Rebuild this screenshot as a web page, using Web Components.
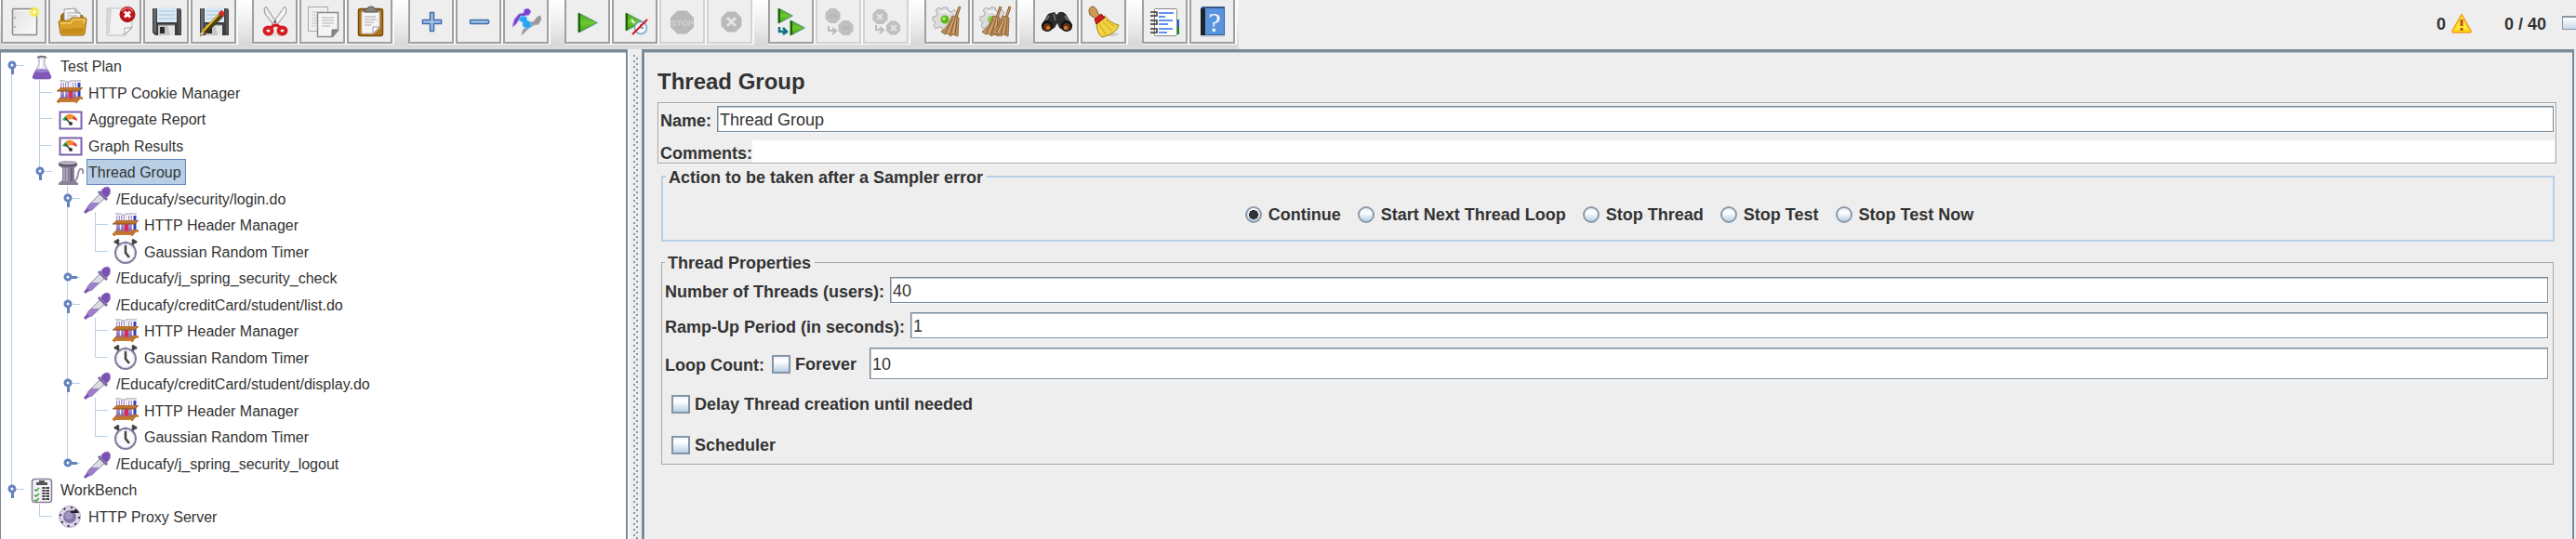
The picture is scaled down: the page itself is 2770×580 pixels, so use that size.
<!DOCTYPE html>
<html lang="en">
<head>
<meta charset="utf-8">
<title>Thread Group</title>
<style>
  html, body { margin: 0; height: 100%; }
  body { background: #eee; color: #333; font-family: "Liberation Sans", Arial, sans-serif; font-size: 18px; overflow: hidden; }
</style>
</head>
<body>
<jm-app>
  <jm-toolbar slot="toolbar">
    <jm-tool-group>
      <jm-tool icon="new" label="New"></jm-tool><jm-tool icon="open" label="Open"></jm-tool><jm-tool icon="close" label="Close"></jm-tool><jm-tool icon="save" label="Save"></jm-tool><jm-tool icon="saveas" label="Save as"></jm-tool>
    </jm-tool-group>
    <jm-tool-group>
      <jm-tool icon="cut" label="Cut"></jm-tool><jm-tool icon="copy" label="Copy"></jm-tool><jm-tool icon="paste" label="Paste"></jm-tool>
    </jm-tool-group>
    <jm-tool-group>
      <jm-tool icon="plus" label="Expand all"></jm-tool><jm-tool icon="minus" label="Collapse all"></jm-tool><jm-tool icon="toggle" label="Toggle"></jm-tool>
    </jm-tool-group>
    <jm-tool-group>
      <jm-tool icon="play" label="Start"></jm-tool><jm-tool icon="playnow" label="Start no pauses"></jm-tool><jm-tool icon="stop" label="Stop" disabled></jm-tool><jm-tool icon="shutdown" label="Shutdown" disabled></jm-tool>
    </jm-tool-group>
    <jm-tool-group>
      <jm-tool icon="rstart" label="Remote start all"></jm-tool><jm-tool icon="rstop" label="Remote stop all" disabled></jm-tool><jm-tool icon="rshut" label="Remote shutdown all" disabled></jm-tool>
    </jm-tool-group>
    <jm-tool-group>
      <jm-tool icon="clear" label="Clear"></jm-tool><jm-tool icon="clearall" label="Clear all"></jm-tool>
    </jm-tool-group>
    <jm-tool-group>
      <jm-tool icon="find" label="Search"></jm-tool><jm-tool icon="reset" label="Reset search"></jm-tool>
    </jm-tool-group>
    <jm-tool-group>
      <jm-tool icon="func" label="Function helper"></jm-tool><jm-tool icon="help" label="Help"></jm-tool>
    </jm-tool-group>
  </jm-toolbar>
  <jm-status slot="status" errors="0" threads="0 / 40"></jm-status>

  <jm-tree slot="tree">
    <jm-row guides="O" icon="flask">Test Plan</jm-row>
    <jm-row guides="|+" icon="tubes">HTTP Cookie Manager</jm-row>
    <jm-row guides="|+" icon="gauge">Aggregate Report</jm-row>
    <jm-row guides="|+" icon="gauge">Graph Results</jm-row>
    <jm-row guides="|P" icon="spool" selected>Thread Group</jm-row>
    <jm-row guides="| M" icon="dropper">/Educafy/security/login.do</jm-row>
    <jm-row guides="| |+" icon="tubes">HTTP Header Manager</jm-row>
    <jm-row guides="| |L" icon="clock">Gaussian Random Timer</jm-row>
    <jm-row guides="| C" icon="dropper">/Educafy/j_spring_security_check</jm-row>
    <jm-row guides="| M" icon="dropper">/Educafy/creditCard/student/list.do</jm-row>
    <jm-row guides="| |+" icon="tubes">HTTP Header Manager</jm-row>
    <jm-row guides="| |L" icon="clock">Gaussian Random Timer</jm-row>
    <jm-row guides="| M" icon="dropper">/Educafy/creditCard/student/display.do</jm-row>
    <jm-row guides="| |+" icon="tubes">HTTP Header Manager</jm-row>
    <jm-row guides="| |L" icon="clock">Gaussian Random Timer</jm-row>
    <jm-row guides="| E" icon="dropper">/Educafy/j_spring_security_logout</jm-row>
    <jm-row guides="P" icon="bench">WorkBench</jm-row>
    <jm-row guides=" L" icon="proxy">HTTP Proxy Server</jm-row>
  </jm-tree>

  <jm-editor slot="editor" heading="Thread Group">
    <jm-box>
      <jm-field label="Name:" value="Thread Group"></jm-field>
      <jm-field label="Comments:" value="" flat></jm-field>
    </jm-box>
    <jm-choice legend="Action to be taken after a Sampler error" options="Continue|Start Next Thread Loop|Stop Thread|Stop Test|Stop Test Now"></jm-choice>
    <jm-group legend="Thread Properties">
      <jm-field label="Number of Threads (users):" value="40"></jm-field>
      <jm-field label="Ramp-Up Period (in seconds):" value="1"></jm-field>
      <jm-field label="Loop Count:" value="10" tall><jm-check label="Forever"></jm-check></jm-field>
      <jm-checks>
        <jm-check label="Delay Thread creation until needed"></jm-check>
        <jm-check label="Scheduler"></jm-check>
      </jm-checks>
    </jm-group>
  </jm-editor>
</jm-app>

<script>
/* ---------- toolbar icons, drawn in a 45x45 view that starts at x=2 ---------- */
const octagon = (cx, cy, r, fill) => {
  const k = Math.round(r * 4.1) / 10;
  return `<polygon fill="${fill}" points="${cx-k},${cy-r} ${cx+k},${cy-r} ${cx+r},${cy-k} ${cx+r},${cy+k} ${cx+k},${cy+r} ${cx-k},${cy+r} ${cx-r},${cy+k} ${cx-r},${cy-k}"/>`;
};
const floppy = `<path d="M11 9h29l1 2v27H13l-3-3V9z" fill="#3c3d40"/><path d="M11 9h3v26h-2l-1-1z" fill="#66686c"/><path d="M37 9h3v28h-2z" fill="#55575b"/>
  <rect x="15" y="8" width="21" height="16" fill="#dbe8f5"/><path d="M17 12h17M17 16h17M17 20h17" stroke="#a9c3de" stroke-width="1"/>
  <path d="M16 27h18v11H16z" fill="#c4c4c4"/><path d="M26 27h8v11h-5z" fill="#e4e4e4"/><rect x="18" y="29" width="5" height="7" fill="#2b2c2e"/><path d="M16 27h18" stroke="#8e8e8e"/>`;
const playShape = (x, y, w, h) => `<path d="M${x} ${y}L${x+w} ${y+h/2}L${x} ${y+h}Z" fill="url(#pg)" stroke="#2c7a10" stroke-width="1" stroke-linejoin="round"/><path d="M${x+1} ${y+1}v${h-2}" stroke="#1d5f0a" stroke-width="2"/><path d="M${x+3} ${y+1}L${x+w+1} ${y+h/2}L${x+3} ${y+h-1}" fill="none" stroke="#9cc0cf" stroke-width="1"/>`;
const playDef = `<linearGradient id="pg" x1="0" y1="0" x2="0" y2="1"><stop offset="0" stop-color="#47a51c"/><stop offset=".5" stop-color="#6cc932"/><stop offset="1" stop-color="#3f9c16"/></linearGradient>`;
const gear = `<path d="M20 8h5l1 4 3 1 3-3 3 3-2 4 2 3v4l-3 1-2 4-4 1-1 3h-5l-1-3-3-1-4 2-2-4 2-3-3-2v-4l4-1 1-3-2-3 3-3 4 2z" fill="#dcdcdc" stroke="#aaa"/><path d="M17 13l6-1 4 3" stroke="#f8f8f8" stroke-width="2" fill="none"/>`;
const broom = (dx) => `<g transform="translate(${dx} 0)"><path d="M38 7L34 19" stroke="#8d6238" stroke-width="3"/><path d="M38 7L34 19" stroke="#c89e6a" stroke-width="1"/><path d="M30 17l7 2-1 20-5-2-3 2-3-3-3 1-4-3c5-3 9-9 12-17z" fill="#bd905c" stroke="#92693c"/><path d="M31 20l-8 15M33 20l-5 17M35 20l-2 17" stroke="#80582f" stroke-width="1"/><path d="M32 20l-7 15M34 21l-3 15" stroke="#deb986" stroke-width="1"/></g>`;
const glyph = {
  new: `<defs><linearGradient id="g" x1="0" y1="0" x2="1" y2="1"><stop offset="0" stop-color="#e2e2e2"/><stop offset="1" stop-color="#fafafa"/></linearGradient></defs><rect x="12.5" y="9.500" width="26" height="28" rx="1" fill="url(#g)" stroke="#8b8b8b" stroke-width="1.500"/><path d="M14.500 11.500h22v24" fill="none" stroke="#fff"/><circle cx="15" cy="19" r="1" fill="#aaa"/><circle cx="15" cy="29" r="1" fill="#aaa"/><circle cx="36" cy="13" r="6" fill="#f6ee6a" opacity=".45"/><circle cx="36" cy="13" r="4" fill="#f7ea3e"/><circle cx="36" cy="13" r="2" fill="#fffbd0"/>`,
  open: `<path d="M13 17l2-3h7l2 2h13l1 4v8H13z" fill="#9a6a0c"/><path d="M17 10l12-1 5 5 2 12H17z" fill="#f5f5f5" stroke="#999"/><path d="M20 14h8M20 17h11M20 20h12" stroke="#aaa"/><path d="M29 9v5h5" fill="#ccc" stroke="#999"/><path d="M11 24q0-2 2-2h10l2-3h14q2 0 2 2l-2 15q0 2-3 2H15q-2 0-2-2z" fill="#d9a02a" stroke="#9d6b0e"/><path d="M13 25h11l2-4h13l-1 4" fill="none" stroke="#f2cc6a" stroke-width="1.500"/><path d="M14 31l24-1-1 6H15z" fill="#c58a17"/>`,
  close: `<path d="M12 9h27v21l-8 8H12z" fill="#f2f2f2" stroke="#bdbdbd"/><path d="M13 10h4l-2 26h-2z" fill="#d6d6d6"/><path d="M39 29l-9 9q2-4 1-8 4 1 8-1z" fill="#fff" stroke="#aaa"/><circle cx="34" cy="15.500" r="8" fill="#c4151a" stroke="#8f0a0e"/><path d="M28 12q6-7 12 0" stroke="#e57373" stroke-width="1.500" fill="none"/><path d="M31 12.500l6 6M37 12.500l-6 6" stroke="#fff" stroke-width="3"/>`,
  save: floppy,
  saveas: floppy + `<path d="M32 13l4 4L17 36l-7 3 3-7z" fill="#3a3214"/><path d="M30 15l3 3-18 18-3-3z" fill="#e8b71e"/><path d="M32 17L15 35" stroke="#3b3411" stroke-width="2"/><path d="M30 14l3-3q2 0 4 4l-3 3z" fill="#e0262b"/><path d="M10 39l2-6 3 3z" fill="#e8cfa0" stroke="#725a2c" stroke-width=".5"/>`,
  cut: `<ellipse cx="25" cy="37" rx="9" ry="2" fill="#ddd"/><path d="M15 7l-2 3 1 5 11 14 3-2z" fill="#ececec" stroke="#909090"/><path d="M35 7l2 3-1 5-11 14-4-2z" fill="#f4f4f4" stroke="#909090"/><path d="M25 22v3" stroke="#666" stroke-width="2"/><ellipse cx="17.500" cy="33" rx="4" ry="3.500" fill="none" stroke="#d81c20" stroke-width="4"/><ellipse cx="32.500" cy="33" rx="4" ry="3.500" fill="none" stroke="#d81c20" stroke-width="4"/><path d="M20 30l4-3h3l4 3" stroke="#d81c20" stroke-width="3" fill="none"/>`,
  copy: `<rect x="9.500" y="7.500" width="21" height="26" fill="#f1f1f1" stroke="#a8a8a8"/><path d="M13 13h13M13 16h8M13 19h7M13 22h7M13 25h7M13 28h5" stroke="#c6c6c6"/><path d="M19.500 13.500h22v19l-6 7h-16z" fill="#f5f5f5" stroke="#8b8b8b" stroke-width="1.500"/><path d="M24 19h13M24 22h13M24 25h13M24 28h9" stroke="#b4b4b4"/><path d="M41 32l-6 7v-7z" fill="#888" stroke="#777"/>`,
  paste: `<rect x="12.500" y="9.500" width="26" height="29" rx="2" fill="#b0741d" stroke="#7d4d0b" stroke-width="1.500"/><path d="M16 13h19v17l-6 6H16z" fill="#f5f5f5" stroke="#c9c9c9"/><path d="M19 18h12M19 21h13M19 24h10M19 27h7" stroke="#a9a9a9"/><path d="M35 29l-7 7v-7z" fill="#fff" stroke="#999"/><path d="M19 13v-3h3q0-3 4-3t4 3h3v3z" fill="#85877f" stroke="#55574f"/>`,
  plus: `<path d="M23.500 13.500h4v8h8v4h-8v8h-4v-8h-8v-4h8z" fill="#a5c1e3" stroke="#3b6dab" stroke-width="1.500" stroke-linejoin="round"/>`,
  minus: `<rect x="15.500" y="21.500" width="20" height="4" rx="1" fill="#a5c1e3" stroke="#3b6dab" stroke-width="1.500"/>`,
  toggle: `<path d="M20 38l1-5 6-8 6-2 4-5 3-1 1 4-3 5-5 1-6 4z" fill="#999" stroke="#b0b0b0"/><path d="M10 29l2-8 5-6 5-1 1-4 4-1 3 3-2 4-5 1-6 4-3 5z" fill="#7a3fd0" stroke="#b196e0"/><path d="M19 17l6 1 1 4 4 2v5l-4 2-5-3v-4l-4-2z" fill="#2aa3f2" stroke="#7cc8f8"/>`,
  play: `<defs>${playDef}</defs>` + playShape(15, 14, 20, 21),
  playnow: `<defs>${playDef}</defs>` + playShape(15, 14, 18, 19) + `<circle cx="31" cy="30" r="6.500" fill="#eef5fb" stroke="#7fa6c4" stroke-width="1.500"/><path d="M31 26v4h3" stroke="#557" fill="none"/><path d="M21 21l3 4" stroke="#fff" stroke-width="2"/><path d="M22 37L38 21" stroke="#d1151a" stroke-width="2"/>`,
  stop: octagon(24.5, 24, 12.5, "#b9b9b9") + `<text x="24.500" y="28" text-anchor="middle" font-size="9" font-weight="bold" fill="#d2d2d2">STOP</text>`,
  shutdown: octagon(26.5, 23.5, 11, "#b9b9b9") + `<path d="M22 19l9 9M31 19l-9 9" stroke="#e4e4e4" stroke-width="3"/>`,
  rstart: `<defs>${playDef}</defs>` + playShape(11, 9, 15, 16) + playShape(24, 22, 15, 16) + `<path d="M12 29v5h7M16 30l4 4-4 3" fill="none" stroke="#127286" stroke-width="2.500"/>`,
  rstop: octagon(18.5, 17, 8, "#c0c0c0") + octagon(32.5, 30, 8, "#c0c0c0") + `<path d="M14 16h9M14 18h9M28 29h9M28 31h9" stroke="#b2b2b2" stroke-width="1"/><path d="M14 28v5h7M18 30l4 3-4 4" fill="none" stroke="#bbb" stroke-width="2"/>`,
  rshut: octagon(18.5, 18, 8, "#c0c0c0") + octagon(32.5, 30, 7.5, "#c0c0c0") + `<path d="M15 15l6 6M21 15l-6 6M30 27l6 6M36 27l-6 6" stroke="#e4e4e4" stroke-width="2"/><path d="M14 27v5h7M18 29l4 3-4 4" fill="none" stroke="#bbb" stroke-width="2"/>`,
  clear: gear + `<circle cx="22" cy="21" r="4.500" fill="#55b714"/><circle cx="21" cy="20" r="2" fill="#a5e36c"/>` + broom(0),
  clearall: gear + `<circle cx="21" cy="21" r="4" fill="#8ccb52"/>` + broom(-7) + broom(3),
  find: `<path d="M19 14l4-1 2 3 3-3h4l3 2 7 12-1 5-6 2-7-4-2-5-3 5-7 4-6-2-1-5 7-12z" fill="#2d2d2d"/><path d="M17 17l-5 8M34 17l5 8M22 15l2 7" stroke="#777" stroke-width="1.500"/><circle cx="15" cy="28" r="6" fill="#111"/><circle cx="36" cy="28" r="6" fill="#111"/><circle cx="15" cy="29" r="4" fill="#6b3410"/><circle cx="36" cy="29" r="4" fill="#6b3410"/><circle cx="16" cy="30" r="2" fill="#d77a35"/><circle cx="35" cy="30" r="2" fill="#d77a35"/>`,
  reset: `<ellipse cx="31" cy="37" rx="10" ry="2" fill="#ccc"/><path d="M9 12q0-5 5-5l3 3 3 7-4 3-6-4z" fill="#cf9a58" stroke="#8b5e24"/><path d="M26 17q6 8 15 10-2 9-18 13-6-4-6-17z" fill="#f1d343" stroke="#a3840f"/><path d="M24 24l10 9M20 26l7 11M27 22l10 7" stroke="#c9a51b"/><path d="M15 21l7-6 4 4-9 7z" fill="#cf1c1f" stroke="#9c1012"/>`,
  func: `<path d="M36 21h4v8h-4z" fill="#1c62e0"/><path d="M36 29h4v8h-4z" fill="#0f8a12"/><rect x="13.500" y="9.500" width="24" height="29" rx="1" fill="#fff" stroke="#888"/><path d="M18 14h16M18 18h7M18 22h15M18 26h10M18 31h15M18 35h9" stroke="#2b6ef0" stroke-width="1.500"/><path d="M9 13h7v4H9M9 22h7v4H9M9 31h7v4H9" fill="none" stroke="#333" stroke-width="1.500"/>`,
  help: `<path d="M12 9l2-2h24v31H12z" fill="#2c5da6"/><rect x="16" y="9" width="21" height="28" fill="#5a94dd"/><path d="M12 9h5v29h-5z" fill="#20252c"/><path d="M14 7h24v2H13z" fill="#34588c"/><path d="M12 39h26" stroke="#bbb"/><text x="27" y="34" text-anchor="middle" font-size="30" fill="#f4f8fd" font-family="Liberation Serif, serif">?</text>`
};

/* ---------- tree icons, 30x28 ---------- */
const tree = {
  flask: `<path d="M12 4h6v7l6 12q2 4-2 4H8q-4 0-2-4l6-12z" fill="#eeeaf4" stroke="#a89bbd"/><path d="M8 18h14l3 6q1 3-3 3H8q-4 0-3-3z" fill="#8059b8"/><ellipse cx="15" cy="18" rx="7" ry="2" fill="#9d80cb"/><path d="M10 4q5-3 10 0" stroke="#555" stroke-width="1.500" fill="none"/><path d="M14 6v10" stroke="#fff" stroke-width="2"/>`,
  tubes: `<path d="M7 3v18M12 3v18M20 3v18" stroke="#a390c9" stroke-width="4"/><path d="M16 8v13" stroke="#e02860" stroke-width="4"/><path d="M25 3v15" stroke="#2f3fc8" stroke-width="3"/><path d="M7 2v6M12 2v6M16 2v6M20 2v6" stroke="#e4e0ee" stroke-width="2"/><path d="M4 1h6M10 2h5M15 1h5M20 1h7" stroke="#9b94a5" stroke-width="1"/><path d="M5 8h24l-4 4H1z" fill="#bd7430"/><path d="M1 12h24l4-4" fill="none" stroke="#8f4f1a"/><path d="M5 18h24l-5 5H1z" fill="#bd7430"/><path d="M7 16v4M12 16v4M20 16v4" stroke="#8970b8" stroke-width="3"/><path d="M16 16v4" stroke="#e02860" stroke-width="3"/><path d="M1 23h23M3 23v2M22 23v2M28 19v2" stroke="#c57b34" stroke-width="2"/>`,
  gauge: `<rect x="4.500" y="5.500" width="23" height="18" fill="#fff" stroke="#7c60ae" stroke-width="2"/><path d="M7 14q2-4 5-5l1 4-3 2z" fill="#32b84d"/><path d="M11 9q5-3 9 1l-2 3-6 1z" fill="#f3902f"/><path d="M19 10q4 1 4 5l-5-2z" fill="#ee3b3b"/><path d="M10 12l6 6" stroke="#333" stroke-width="1.500"/><circle cx="16" cy="18" r="2" fill="#333"/>`,
  spool: `<path d="M19 24q4-2 5-9 1-6 4-5 2 1 1 5" fill="none" stroke="#9a90a8" stroke-width="2"/><path d="M3 3q10-4 20 0v3l-3 3v13l4 3v2H3v-2l4-3V9L3 6z" fill="#8a8099"/><ellipse cx="13" cy="3" rx="10" ry="2" fill="#b4acbf"/><path d="M3 5q10 3 20 0" stroke="#4e4858" stroke-width="1.500" fill="none"/><path d="M9 9v14M12 9v14" stroke="#aaa2b6" stroke-width="2"/><path d="M17 8v15" stroke="#6c637b" stroke-width="2"/>`,
  dropper: `<path d="M19 7l5 5L9 26l-6 2-1-1 3-6z" fill="#dedbe5" stroke="#8f88a0"/><path d="M8 18h9l-8 8-6 2-1-1 3-6z" fill="#9d80cb"/><path d="M16 6l9 9" stroke="#74699a" stroke-width="3"/><path d="M19 8q-1-4 3-6 5-2 6 1 2 6-4 10z" fill="#7b50b3" stroke="#9c80c5"/><path d="M1 29l4-4" stroke="#7b50b3" stroke-width="3"/>`,
  clock: `<path d="M3 4l5-3M27 4l-5-3M6 3l2 4M24 3l-2 4" stroke="#444" stroke-width="3"/><circle cx="15" cy="15" r="11" fill="#fbfbfd" stroke="#85799c" stroke-width="2"/><circle cx="15" cy="15" r="9.500" fill="none" stroke="#ddd8e5"/><path d="M15 7v8l4 5" fill="none" stroke="#444" stroke-width="2.500"/><circle cx="15" cy="4" r="1.500" fill="#85799c"/>`,
  bench: `<rect x="4.500" y="1.500" width="21" height="25" rx="3" fill="#f3f1f7" stroke="#8a7d9e" stroke-width="1.500"/><path d="M9 5h3V3h6v2h3v3H9z" fill="#555"/><path d="M15 11h8M15 14h8M15 17h8M15 20h8M15 23h8" stroke="#444" stroke-width="2"/><path d="M15 10v14M19 10v14" stroke="#ddd" stroke-width="1"/><path d="M7 13l2 1 3-3M7 19l2 1 3-3M7 24l2 1 3-3" fill="none" stroke="#3aa52c" stroke-width="1.500"/>`,
  proxy: `<circle cx="15" cy="14" r="11.500" fill="#dcd5ea" stroke="#b3a7c8"/><circle cx="15" cy="14" r="10" fill="none" stroke="#333" stroke-width="2" stroke-dasharray="2 6"/><circle cx="15" cy="14" r="7" fill="#8577a8"/><circle cx="14" cy="13" r="4" fill="#a396c4"/><path d="M17 9h6l-2-3M16 9l5-1" stroke="#222" stroke-width="2" fill="none"/>`
};

/* ---------- guide cells of the tree ---------- */
const LINE = "#b8cfe5", KNOB = "#6382bf";
const seg = (x, y, w, h, c = LINE) => `<rect x="${x}" y="${y}" width="${w}" height="${h}" fill="${c}"/>`;
const knob = `<circle cx="13" cy="13" r="3" fill="#fff" stroke="${KNOB}" stroke-width="3"/>`;
const stub = seg(13, 13, 13, 1), full = seg(12, 0, 1, "100%"), upper = seg(12, 0, 1, 14), lower = seg(12, 14, 1, "100%");
const stalkDown = seg(12, 16, 3, 7, KNOB), stalkRight = seg(16, 12, 7, 3, KNOB);
const cell = {
  " ": "", "|": full, "+": full + stub, "L": upper + stub,
  "O": lower + stub + stalkDown + knob,
  "M": full + stub + stalkDown + knob,
  "P": upper + stub + stalkDown + knob,
  "C": full + stub + stalkRight + knob,
  "E": upper + stub + stalkRight + knob
};

function define(name, render, after) {
  customElements.define(name, class extends HTMLElement {
    connectedCallback() {
      if (this.shadowRoot) return;
      const root = this.attachShadow({ mode: "open" });
      root.innerHTML = render(this);
      if (after) after(this, root);
    }
  });
}
const fieldsetCss = `
  fieldset { margin: 0; min-width: 0; border: 1px solid var(--edge); box-shadow: none; }
  legend { padding: 2px 4px 0 3px; font-weight: bold; line-height: 20px; }`;

define("jm-app", () => `<style>
  :host { display: flex; flex-direction: column; height: 100vh; }
  header { display: flex; flex: none; height: 53px; justify-content: space-between; }
  main { flex: 1; min-height: 0; display: grid; grid-template-columns: 675px 15px minmax(0, 1fr); }
  .tree { background: #fff; border: solid #7a8a99; border-width: 3px 2px 0 0; box-shadow: inset 1px 0 #7a8a99, inset 0 1px #b9c3cd; overflow: hidden; }
  .split { display: flex; justify-content: center; padding-top: 6px; border-left: 2px solid #fafafa; }
  .split i { width: 6px; background: radial-gradient(circle at 1px 1px, #8796a5 1px, transparent 1px) 0 0 / 6px 6px, radial-gradient(circle at 4px 4px, #8796a5 1px, transparent 1px) 0 0 / 6px 6px; }
  .edit { border: solid #7a8a99; border-width: 3px 2px 0 3px; margin-right: 2px; box-shadow: inset 0 1px #b9c3cd, inset 1px 0 #fafafa; overflow: hidden; }
  </style><header><slot name="toolbar"></slot><slot name="status"></slot></header>
  <main><div class="tree"><slot name="tree"></slot></div><div class="split"><i></i></div><section class="edit"><slot name="editor"></slot></section></main>`);

define("jm-toolbar", () => `<style>
  :host { display: flex; gap: 15px; padding: 0 2px 0 1px; align-items: flex-start; background: linear-gradient(#fff, #eee 25px, #d8d8d8 48px, #ddd); }
  </style><slot></slot>`);
define("jm-tool-group", () => `<style>:host { display: flex; }</style><slot></slot>`);
define("jm-tool", el => {
  const off = el.hasAttribute("disabled");
  return `<style>
  :host { display: block; padding: 0 0 1px; background: #fafafa; }
  button { display: block; width: 49px; height: 47px; margin: 0 2px 0 0; padding: 0; border: solid ${off ? "#d2d2d2" : "#a0a0a0"}; border-width: 0 2px 2px; background: #eee; color: inherit; font: inherit; }
  svg { display: block; width: 45px; height: 45px; }
  </style><button type="button" aria-label="${el.getAttribute("label")}" ${off ? "disabled" : ""}><svg viewBox="2 0 45 45" aria-hidden="true">${glyph[el.getAttribute("icon")]}</svg></button>`;
});

define("jm-status", el => `<style>
  :host { display: flex; align-items: flex-start; font-weight: bold; line-height: 20px; padding-top: 16px; }
  svg { width: 22px; height: 22px; margin: -2px 35px 0 6px; }
  .bar { width: 14px; height: 12px; margin: 1px 0 0 17px; border: solid #8e969e; border-width: 2px 0 1px 1px; background: linear-gradient(#fff, #c5d8ea); }
  </style><span>${el.getAttribute("errors")}</span>
  <svg viewBox="0 0 22 22" aria-hidden="true"><path d="M11 1.500L21 19q.5 2-1 2H2q-1.500 0-1-2z" fill="#fcdb14" stroke="#f39b27" stroke-width="1.500" stroke-linejoin="round"/><path d="M11 4L4 18h14z" fill="#ffe93a"/><path d="M11 7v7M11 16v3" stroke="#b5511c" stroke-width="3"/></svg>
  <span>${el.getAttribute("threads")}</span><span class="bar"></span>`);

define("jm-tree", () => `<style>
  :host { display: block; padding-top: 1px; font-size: 16px; }
  ::slotted(jm-row:nth-child(odd)) { height: 29px; }
  ::slotted(jm-row:nth-child(even)) { height: 28px; }
  </style><slot></slot>`, el => el.setAttribute("role", "tree"));
define("jm-row", el => `<style>
  :host { display: flex; align-items: stretch; white-space: nowrap; }
  .g { width: 30px; height: 100%; flex: none; }
  .icon { width: 30px; height: 30px; flex: none; align-self: center; overflow: visible; margin-right: 3px; }
  span { display: block; padding: 2px 4px 0 1px; border: 1px solid transparent; line-height: 24px; align-self: flex-start; }
  :host([selected]) span { background: #b8cfe5; border-color: #6382bf; }
  </style>${[...el.getAttribute("guides")].map(c => `<svg class="g" aria-hidden="true">${cell[c]}</svg>`).join("")}<svg class="icon" viewBox="0 -1 30 30" aria-hidden="true">${tree[el.getAttribute("icon")]}</svg><span><slot></slot></span>`,
  el => { el.setAttribute("role", "treeitem"); el.setAttribute("aria-level", el.getAttribute("guides").length); });

define("jm-editor", el => `<style>
  :host { display: block; padding: 18px 17px 0 14px; }
  h1 { margin: 0 0 8px; font-size: 24px; line-height: 28px; }
  </style><h1>${el.getAttribute("heading")}</h1><slot></slot>`);
define("jm-box", () => `<style>
  :host { display: grid; gap: 9px; padding: 3px 2px 0; border: 1px solid #a3a3a3; box-shadow: inset 1px 1px #fafafa, 1px 1px #fafafa; }
  </style><slot></slot>`);

define("jm-field", el => `<style>
  :host { display: flex; align-items: stretch; height: 28px; }
  :host([tall]) { height: 34px; }
  :host([flat]) { height: 24px; margin-right: -1px; }
  label { font-weight: bold; padding-top: 4px; display: flex; align-items: center; white-space: nowrap; margin-right: 6px; }
  :host([flat]) label { margin-right: 0; }
  ::slotted(jm-check) { margin: 2px 14px 0 2px; }
  input { flex: 1; min-width: 0; box-sizing: border-box; margin: 0; padding: 3px 2px 0; border: 1px solid #7a8a99; box-shadow: inset 1px 1px #b9c5d0, 1px 1px #fafafa; background: #fff; color: #333; font: inherit; border-radius: 0; }
  :host([flat]) input { border: 0; box-shadow: none; }
  </style><label for="f">${el.getAttribute("label")}</label><slot></slot><input id="f" type="text" value="${el.getAttribute("value")}">`);

define("jm-check", el => `<style>
  :host { display: flex; align-items: center; }
  input { appearance: none; width: 20px; height: 20px; margin: 0 5px 0 0; border: 2px solid #8494a4; background: linear-gradient(#eef4fa, #fff 30%, #b8cfe5); flex: none; }
  label { font-weight: bold; line-height: 20px; white-space: nowrap; }
  </style><input id="c" type="checkbox"><label for="c">${el.getAttribute("label")}</label>`);
define("jm-checks", () => `<style>
  :host { display: grid; gap: 10px; padding-left: 7px; }
  ::slotted(jm-check) { height: 34px; }
  </style><slot></slot>`);

define("jm-choice", el => `<style>${fieldsetCss}
  :host { display: block; --edge: #b8cfe5; margin: 3px 2px 0 4px; }
  fieldset { border-width: 2px; padding: 20px 0 17px 3px; }
  .row { display: flex; flex-wrap: wrap; justify-content: center; gap: 18px; }
  label { display: flex; align-items: center; gap: 7px; font-weight: bold; line-height: 20px; }
  input { appearance: none; width: 18px; height: 18px; margin: 0; border: 2px solid #8a9aaa; border-radius: 50%; background: linear-gradient(#e6eef6, #fff 35%, #b8cfe5); }
  input:checked { background: radial-gradient(circle, #333 5px, transparent 5px), linear-gradient(#fff, #b8cfe5); }
  </style><fieldset><legend>${el.getAttribute("legend")}</legend><div class="row">${el.getAttribute("options").split("|").map((o, i) => `<label><input type="radio" name="action" ${i ? "" : "checked"}>${o}</label>`).join("")}</div></fieldset>`);

define("jm-group", el => `<style>${fieldsetCss}
  :host { display: block; --edge: #a8a8a8; margin: 11px 3px 0 4px; }
  fieldset { padding: 5px 5px 3px 3px; }
  .rows { display: grid; gap: 10px; }
  </style><fieldset><legend>${el.getAttribute("legend")}</legend><div class="rows"><slot></slot></div></fieldset>`);
</script>
</body>
</html>
